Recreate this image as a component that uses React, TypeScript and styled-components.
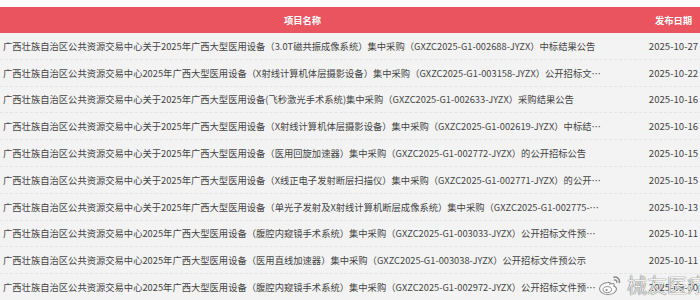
import React from "react";
import styled, { createGlobalStyle } from "styled-components";

const GlobalStyle = createGlobalStyle`
  html, body {
    margin: 0;
    padding: 0;
    background: #ffffff;
    overflow: hidden;
  }
  body {
    font-family: "Noto Sans CJK SC", "Noto Sans", sans-serif;
  }
`;

const Page = styled.div`
  position: relative;
  width: 700px;
  height: 300px;
  overflow: hidden;
  padding-top: 7px;
  box-sizing: border-box;
`;

const Table = styled.div`
  width: 742px;
  display: flex;
  flex-direction: column;
`;

const HeaderRow = styled.div`
  display: grid;
  grid-template-columns: 605px 137px;
  height: 26px;
  align-items: center;
  background: #ea545f;
  color: #ffffff;
  font-weight: 700;
  font-size: 9.3px;
`;

const HeaderCell = styled.div`
  text-align: center;
`;

const Row = styled.div`
  display: grid;
  grid-template-columns: 605px 137px;
  height: 26.8px;
  align-items: center;
  background: #f3f3f3;
  border-bottom: 1px dashed #e4e4e4;
  box-sizing: border-box;
  color: #444444;
  font-size: 9.3px;
`;

const TitleCell = styled.div`
  padding: 0 2px 0 3px;
  white-space: nowrap;
  overflow: hidden;
  text-overflow: ellipsis;
`;

const DateCell = styled.div`
  text-align: center;
  font-size: 9.6px;
  color: #444444;
`;

const Watermark = styled.div`
  position: absolute;
  right: -7px;
  bottom: 1px;
  display: flex;
  align-items: center;
  gap: 5px;
`;

const WatermarkText = styled.span`
  font-family: "Noto Sans CJK SC", sans-serif;
  font-size: 20px;
  font-weight: 300;
  color: rgba(255, 255, 255, 0.92);
  text-shadow: 0 0 1px #777, 0 0 1px #777, 0 0 1px #999;
`;

const WeiboLogo = () => (
  <svg width="24" height="22" viewBox="0 0 24 22" fill="none">
    <path
      d="M10 8.5c-4.5 0-8.5 3-8.5 6.3 0 3.2 3.8 5.7 8.4 5.7 5 0 8.6-2.6 8.6-5.4 0-1.8-1.5-2.6-2.6-2.9.5-1.2.4-2.5-1-2.7-1.2-.2-3 .6-3 .6.4-1-.1-2.2-1.9-1.6z"
      fill="#ffffff"
      stroke="#8a8a8a"
      strokeWidth="1.1"
    />
    <ellipse cx="9.3" cy="15.6" rx="4.2" ry="3" fill="#ffffff" stroke="#8a8a8a" strokeWidth="1" />
    <circle cx="8.6" cy="16" r="1.1" fill="#8a8a8a" />
    <path d="M16 3.2c3-.7 6 1.8 5.4 5.2" stroke="#8a8a8a" strokeWidth="1.6" strokeLinecap="round" fill="none" />
    <path d="M16.4 6c1.4-.3 2.7.8 2.4 2.3" stroke="#8a8a8a" strokeWidth="1.3" strokeLinecap="round" fill="none" />
  </svg>
);

const rows: { title: string; date: string }[] = [
  {
    title:
      "广西壮族自治区公共资源交易中心关于2025年广西大型医用设备（3.0T磁共振成像系统）集中采购（GXZC2025-G1-002688-JYZX）中标结果公告",
    date: "2025-10-27",
  },
  {
    title:
      "广西壮族自治区公共资源交易中心2025年广西大型医用设备（X射线计算机体层摄影设备）集中采购（GXZC2025-G1-003158-JYZX）公开招标文件预公示",
    date: "2025-10-22",
  },
  {
    title:
      "广西壮族自治区公共资源交易中心关于2025年广西大型医用设备(飞秒激光手术系统)集中采购（GXZC2025-G1-002633-JYZX）采购结果公告",
    date: "2025-10-16",
  },
  {
    title:
      "广西壮族自治区公共资源交易中心关于2025年广西大型医用设备（X射线计算机体层摄影设备）集中采购（GXZC2025-G1-002619-JYZX）中标结果公告",
    date: "2025-10-16",
  },
  {
    title:
      "广西壮族自治区公共资源交易中心关于2025年广西大型医用设备（医用回旋加速器）集中采购（GXZC2025-G1-002772-JYZX）的公开招标公告",
    date: "2025-10-15",
  },
  {
    title:
      "广西壮族自治区公共资源交易中心关于2025年广西大型医用设备（X线正电子发射断层扫描仪）集中采购（GXZC2025-G1-002771-JYZX）的公开招标公告",
    date: "2025-10-15",
  },
  {
    title:
      "广西壮族自治区公共资源交易中心关于2025年广西大型医用设备（单光子发射及X射线计算机断层成像系统）集中采购（GXZC2025-G1-002775-JYZX）的公开招标公告",
    date: "2025-10-13",
  },
  {
    title:
      "广西壮族自治区公共资源交易中心2025年广西大型医用设备（腹腔内窥镜手术系统）集中采购（GXZC2025-G1-003033-JYZX）公开招标文件预公示",
    date: "2025-10-11",
  },
  {
    title:
      "广西壮族自治区公共资源交易中心2025年广西大型医用设备（医用直线加速器）集中采购（GXZC2025-G1-003038-JYZX）公开招标文件预公示",
    date: "2025-10-11",
  },
  {
    title:
      "广西壮族自治区公共资源交易中心2025年广西大型医用设备（腹腔内窥镜手术系统）集中采购（GXZC2025-G1-002972-JYZX）公开招标文件预公示",
    date: "2025-09-30",
  },
];

export default function App() {
  return (
    <>
      <GlobalStyle />
      <Page>
        <Table>
          <HeaderRow>
            <HeaderCell>项目名称</HeaderCell>
            <HeaderCell>发布日期</HeaderCell>
          </HeaderRow>
          {rows.map((r, i) => (
            <Row key={i}>
              <TitleCell>{r.title}</TitleCell>
              <DateCell>{r.date}</DateCell>
            </Row>
          ))}
        </Table>
        <Watermark>
          <WeiboLogo />
          <WatermarkText>械友医疗</WatermarkText>
        </Watermark>
      </Page>
    </>
  );
}
